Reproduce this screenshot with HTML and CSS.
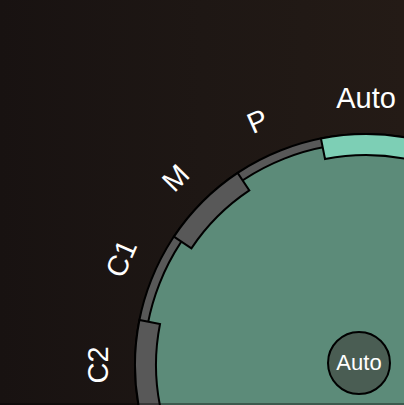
FILE: index.html
```html
<!DOCTYPE html>
<html>
<head>
<meta charset="utf-8">
<link rel="stylesheet" href="styles.css">
</head>
<body>
<div class="stage">
  <svg class="dial" width="404" height="405" viewBox="0 0 404 405" xmlns="http://www.w3.org/2000/svg">
    <circle class="ring" cx="366" cy="365" r="231"/>
    <circle class="disk" cx="366" cy="365" r="222"/>
    <path class="seg seg-on" d="M320.93 138.44 A231 231 0 0 1 411.07 138.44 L406.97 159.03 A210 210 0 0 0 325.03 159.03 Z"/>
    <path class="seg" d="M173.93 236.66 A231 231 0 0 1 237.66 172.93 L249.33 190.39 A210 210 0 0 0 191.39 248.33 Z"/>
    <path class="seg" d="M139.44 410.07 A231 231 0 0 1 139.44 319.93 L160.03 324.03 A210 210 0 0 0 160.03 405.97 Z"/>
    <g class="labels">
      <text x="366" y="108" transform="rotate(0 366 365)">Auto</text>
      <text x="366" y="108" transform="rotate(-24 366 365)">P</text>
      <text x="366" y="108" transform="rotate(-45.5 366 365)">M</text>
      <text x="366" y="108" transform="rotate(-66.5 366 365)">C1</text>
      <text x="366" y="107" transform="rotate(-90 366 365)">C2</text>
    </g>
  </svg>
  <div class="auto-btn">Auto</div>
  <div class="bottom-edge"></div>
</div>
</body>
</html>
```
FILE: styles.css
```css
html, body {
  margin: 0;
  padding: 0;
  background: #1c1512;
}
.stage {
  position: relative;
  width: 404px;
  height: 405px;
  overflow: hidden;
  background: linear-gradient(to right, #181211 0%, #1e1714 50%, #241b16 100%);
  font-family: "Liberation Sans", Arial, sans-serif;
}
.dial {
  display: block;
}
.ring {
  fill: #585858;
  stroke: #000;
  stroke-width: 2;
}
.disk {
  fill: #5c8b79;
  stroke: #000;
  stroke-width: 2;
}
.seg {
  fill: #585858;
  stroke: #000;
  stroke-width: 2;
  stroke-linejoin: miter;
}
.seg-on {
  fill: #7dcfb5;
}
.labels text {
  fill: #fff;
  font-family: "Liberation Sans", Arial, sans-serif;
  font-size: 29px;
  text-anchor: middle;
}
.auto-btn {
  position: absolute;
  left: 327px;
  top: 331px;
  width: 64px;
  height: 64px;
  box-sizing: border-box;
  border: 2px solid #000;
  border-radius: 50%;
  background: #4a5d53;
  color: #fff;
  font-size: 22px;
  display: flex;
  align-items: center;
  justify-content: center;
  line-height: 1;
}
.bottom-edge {
  position: absolute;
  left: 0;
  right: 0;
  bottom: 0;
  height: 2px;
  background: rgba(0, 0, 0, 0.35);
}
```
